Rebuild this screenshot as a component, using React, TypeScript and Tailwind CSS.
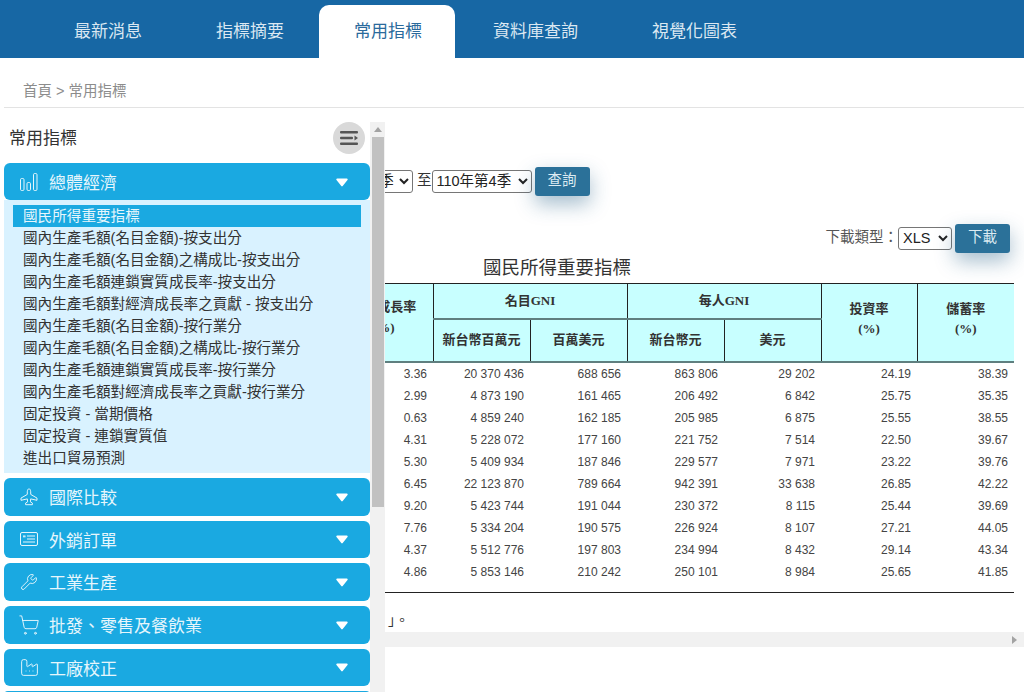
import { Wrench, ShoppingCart, Factory } from 'lucide-react';
import type { ComponentType } from 'react';

const SANS = 'font-["Liberation_Sans","Noto_Sans_CJK_TC",sans-serif]';

const TABS = [
  { label: '最新消息', cls: 'ml-[40px] mr-[6px] px-[34px]' },
  { label: '指標摘要', cls: 'mr-[1px] px-[34px]' },
  { label: '常用指標', cls: 'mr-[4px] pl-[35px] pr-[33px] bg-white text-[#2a6a9c]' },
  { label: '資料庫查詢', cls: 'mr-[6px] px-[34px]' },
  { label: '視覺化圖表', cls: 'px-[34px]' },
];

const LINKS = [
  '國民所得重要指標',
  '國內生產毛額(名目金額)-按支出分',
  '國內生產毛額(名目金額)之構成比-按支出分',
  '國內生產毛額連鎖實質成長率-按支出分',
  '國內生產毛額對經濟成長率之貢獻 - 按支出分',
  '國內生產毛額(名目金額)-按行業分',
  '國內生產毛額(名目金額)之構成比-按行業分',
  '國內生產毛額連鎖實質成長率-按行業分',
  '國內生產毛額對經濟成長率之貢獻-按行業分',
  '固定投資 - 當期價格',
  '固定投資 - 連鎖實質值',
  '進出口貿易預測',
];

function BarsIcon() {
  return (
    <svg viewBox="0 0 18 18" className="h-[18px] w-[18px] fill-none stroke-current" strokeWidth="1">
      <rect x="0.5" y="5.5" width="3.5" height="12" rx="1.2" />
      <rect x="7" y="9.5" width="3.5" height="8" rx="1.2" />
      <rect x="13.5" y="0.5" width="3.5" height="17" rx="1.2" />
    </svg>
  );
}

function PlaneIcon() {
  return (
    <svg viewBox="0 0 18 18" className="h-[18px] w-[18px] fill-none stroke-current" strokeWidth="1">
      <path d="M9 .8c1 0 1.7 1.5 1.7 3v2.6l6.3 3.7v2.2l-6.3-1.4-.3 3 2 1.2v1.6H5.6v-1.6l2-1.2-.3-3L1 12.3v-2.2l6.3-3.7V3.800c0-1.500.7-3 1.700-3z" />
    </svg>
  );
}

function CardIcon() {
  return (
    <svg viewBox="0 0 18 18" className="h-[18px] w-[18px] fill-none stroke-current" strokeWidth="1">
      <rect x="0.5" y="2.500" width="17" height="13" rx="1.500" />
      <path d="M3 6h2.500M3 6.800h2.500M7 6h8M7 9h8M3 12h12" />
    </svg>
  );
}

function WrenchIcon() {
  return <Wrench className="h-[18px] w-[18px]" strokeWidth={1.25} />;
}

function CartIcon() {
  return <ShoppingCart className="ml-[-2px] h-[22px] w-[22px]" strokeWidth={1.05} />;
}

function FactoryIcon() {
  return <Factory className="ml-[-1px] h-[21px] w-[21px]" strokeWidth={1.1} />;
}

const GROUPS: { label: string; Icon: ComponentType }[] = [
  { label: '國際比較', Icon: PlaneIcon },
  { label: '外銷訂單', Icon: CardIcon },
  { label: '工業生產', Icon: WrenchIcon },
  { label: '批發、零售及餐飲業', Icon: CartIcon },
  { label: '工廠校正', Icon: FactoryIcon },
];

const ROWS = [
  ['3.36', '20 370 436', '688 656', '863 806', '29 202', '24.19', '38.39'],
  ['2.99', '4 873 190', '161 465', '206 492', '6 842', '25.75', '35.35'],
  ['0.63', '4 859 240', '162 185', '205 985', '6 875', '25.55', '38.55'],
  ['4.31', '5 228 072', '177 160', '221 752', '7 514', '22.50', '39.67'],
  ['5.30', '5 409 934', '187 846', '229 577', '7 971', '23.22', '39.76'],
  ['6.45', '22 123 870', '789 664', '942 391', '33 638', '26.85', '42.22'],
  ['9.20', '5 423 744', '191 044', '230 372', '8 115', '25.44', '39.69'],
  ['7.76', '5 334 204', '190 575', '226 924', '8 107', '27.21', '44.05'],
  ['4.37', '5 512 776', '197 803', '234 994', '8 432', '29.14', '43.34'],
  ['4.86', '5 853 146', '210 242', '250 101', '8 984', '25.65', '41.85'],
];

function Caret() {
  return (
    <svg viewBox="0 0 12 9" className="mt-[1px] h-[9px] w-[12px] fill-white">
      <path d="M1.200 0.500h9.600c.8 0 1.200.9.700 1.500L6.700 8a.9.9 0 0 1-1.400 0L.5 2c-.5-.6-.1-1.500.7-1.500z" />
    </svg>
  );
}

function GroupHeader({ label, Icon, className }: { label: string; Icon: ComponentType; className: string }) {
  return (
    <div className={`flex items-center bg-[#1aa9e1] pl-[16px] pr-[22px] text-[17px] text-[#e6f6fc] ${className}`}>
      <span className="flex w-[29px] items-center">
        <Icon />
      </span>
      <span className="flex-1 pt-[4px]">{label}</span>
      <Caret />
    </div>
  );
}

function Button({ children }: { children: string }) {
  return (
    <button className="h-[29px] w-[55px] rounded-[3px] bg-[#2b7199] text-[14.5px] text-[#dcebf2] shadow-[0_8px_20px_rgba(30,90,130,0.4)]">
      {children}
    </button>
  );
}

function Select({ value, className }: { value: string; className: string }) {
  return (
    <select defaultValue={value} className={`h-[23px] rounded-[3px] border border-[#767676] bg-white text-[14.5px] text-[#222] appearance-auto ${className}`}>
      <option>{value}</option>
    </select>
  );
}

function Sidebar() {
  return (
    <aside className="flex h-full w-[385px] shrink-0 bg-white">
      <div className="w-[370px] pl-[4px]">
        <div className="flex h-[41px] items-start justify-between pl-[5px] pr-[5px] text-[17px] text-[#333]">
          <span className="pt-[1px] leading-[32px]">常用指標</span>
          <span className="flex h-[32px] w-[32px] items-center justify-center rounded-full bg-[#d9d9d9]">
            <svg viewBox="0 0 20 16" className="h-[16px] w-[20px] fill-[#555]">
              <rect x="1" y="1" width="18" height="2.400" rx="1" />
              <rect x="1" y="6.800" width="13" height="2.400" rx="1" />
              <path d="M15.500 5.600 19 8l-3.500 2.400z" />
              <rect x="1" y="12.600" width="18" height="2.400" rx="1" />
            </svg>
          </span>
        </div>
        <GroupHeader label="總體經濟" Icon={BarsIcon} className="h-[37px] rounded-md" />
        <ul className="mb-[5px] h-[273px] bg-[#d9f2ff] px-[9px] pt-[5px] text-[14.6px] leading-[22px] text-[#333]">
          {LINKS.map((link, i) => (
            <li key={link} className={i === 0 ? 'bg-[#1aa9e1] pl-[10px] text-[#e6f6fc]' : 'pl-[10px]'}>
              {link}
            </li>
          ))}
        </ul>
        <div className="flex flex-col gap-[5px]">
          {GROUPS.map(g => (
            <GroupHeader key={g.label} label={g.label} Icon={g.Icon} className="h-[37.670px] rounded-md" />
          ))}
          <div className="h-[4px] rounded-t-md bg-[#1aa9e1]" />
        </div>
      </div>
      <div className="flex h-full w-[15px] flex-col items-center bg-[#f1f1f1]">
        <svg viewBox="0 0 8 5" className="my-[5px] h-[5px] w-[8px] fill-[#a3a3a3]">
          <path d="M4 0l4 5H0z" />
        </svg>
        <div className="ml-[1px] h-[370px] w-[12px] bg-[#c1c1c1]" />
      </div>
    </aside>
  );
}

function DataTable() {
  const head = 'border-r border-[#222] bg-[#c8ffff] text-center font-bold text-[#333]';
  return (
    <div className="overflow-hidden">
      <table className="ml-[-50px] table-fixed border-collapse text-[13px]">
        <colgroup>
          <col className="w-[98px]" />
          <col className="w-[97px]" />
          <col className="w-[97px]" />
          <col className="w-[97px]" />
          <col className="w-[97px]" />
          <col className="w-[96px]" />
          <col className="w-[97px]" />
        </colgroup>
        <thead className='font-["Liberation_Serif","Noto_Sans_CJK_TC",serif]'>
          <tr className="h-[35px] border-t border-[#222]">
            <th rowSpan={2} className={`${head} pt-[13px] align-top leading-[20.500px]`}>經濟成長率<br />(%)</th>
            <th colSpan={2} className={`${head} border-b-2 border-b-[#5f7f7f]`}>名目GNI</th>
            <th colSpan={2} className={`${head} border-b-2 border-b-[#5f7f7f]`}>每人GNI</th>
            <th rowSpan={2} className={`${head} pt-[15px] align-top leading-[20px]`}>投資率<br />(%)</th>
            <th rowSpan={2} className="bg-[#c8ffff] pt-[15px] text-center align-top font-bold leading-[20px] text-[#333]">儲蓄率<br />(%)</th>
          </tr>
          <tr className="h-[43px] border-b-2 border-b-[#5f7f7f]">
            <th className={head}>新台幣百萬元</th>
            <th className={head}>百萬美元</th>
            <th className={head}>新台幣元</th>
            <th className={head}>美元</th>
          </tr>
        </thead>
        <tbody className="text-[12px] text-[#444]">
          {ROWS.map(row => (
            <tr key={row[1]} className="h-[22px]">
              {row.map((cell, i) => (
                <td key={i} className="pr-[6px] pt-[2px] text-right">{cell}</td>
              ))}
            </tr>
          ))}
          <tr className="h-[11px]">
            {ROWS[0].map((_, i) => (
              <td key={i} className="border-b border-[#222]" />
            ))}
          </tr>
        </tbody>
      </table>
    </div>
  );
}

export default function App() {
  return (
    <div className={`flex h-[692px] flex-col overflow-hidden bg-white ${SANS}`}>
      <nav className="flex h-[58px] shrink-0 items-end bg-[#1767a4] text-[17px] text-[#dbe8f2]">
        {TABS.map(tab => (
          <span key={tab.label} className={`flex h-[53px] items-center rounded-t-[10px] ${tab.cls}`}>
            {tab.label}
          </span>
        ))}
      </nav>
      <div className="ml-[4px] flex h-[50px] shrink-0 items-center border-b border-[#e3e3e3] pl-[19px] pt-[18px] text-[14.500px] text-[#8c8c8c]">
        首頁 &gt; 常用指標
      </div>
      <div className="flex min-h-0 flex-1 pt-[14px]">
        <Sidebar />
        <main className="min-w-0 flex-1 overflow-hidden">
          <div className="mt-[44px] flex h-[30px] items-center text-[14.500px] text-[#333]">
            <Select value="110年第4季" className="ml-[-71px] w-[99px]" />
            <span className="ml-[4px]">至</span>
            <Select value="110年第4季" className="w-[100px]" />
            <span className="ml-[3px]"><Button>查詢</Button></span>
          </div>
          <div className="mt-[27px] flex h-[30px] items-center justify-end pr-[14px] text-[14.500px] text-[#555]">
            <span>下載類型：</span>
            <Select value="XLS" className="mr-[3px] w-[54px]" />
            <Button>下載</Button>
          </div>
          <div className="h-[30px] pl-[98px] pt-[3px] text-[18.500px] leading-[24px] text-[#333]">國民所得重要指標</div>
          <DataTable />
          <div className="mt-[15px] h-[24px] pl-[3px] text-[14px] leading-[24px] text-[#333]">」。</div>
          <div className="flex h-[15px] items-center justify-end bg-[#f1f1f1] pr-[7px]">
            <svg viewBox="0 0 5 8" className="h-[8px] w-[5px] fill-[#a3a3a3]">
              <path d="M0 0l5 4-5 4z" />
            </svg>
          </div>
        </main>
      </div>
    </div>
  );
}
